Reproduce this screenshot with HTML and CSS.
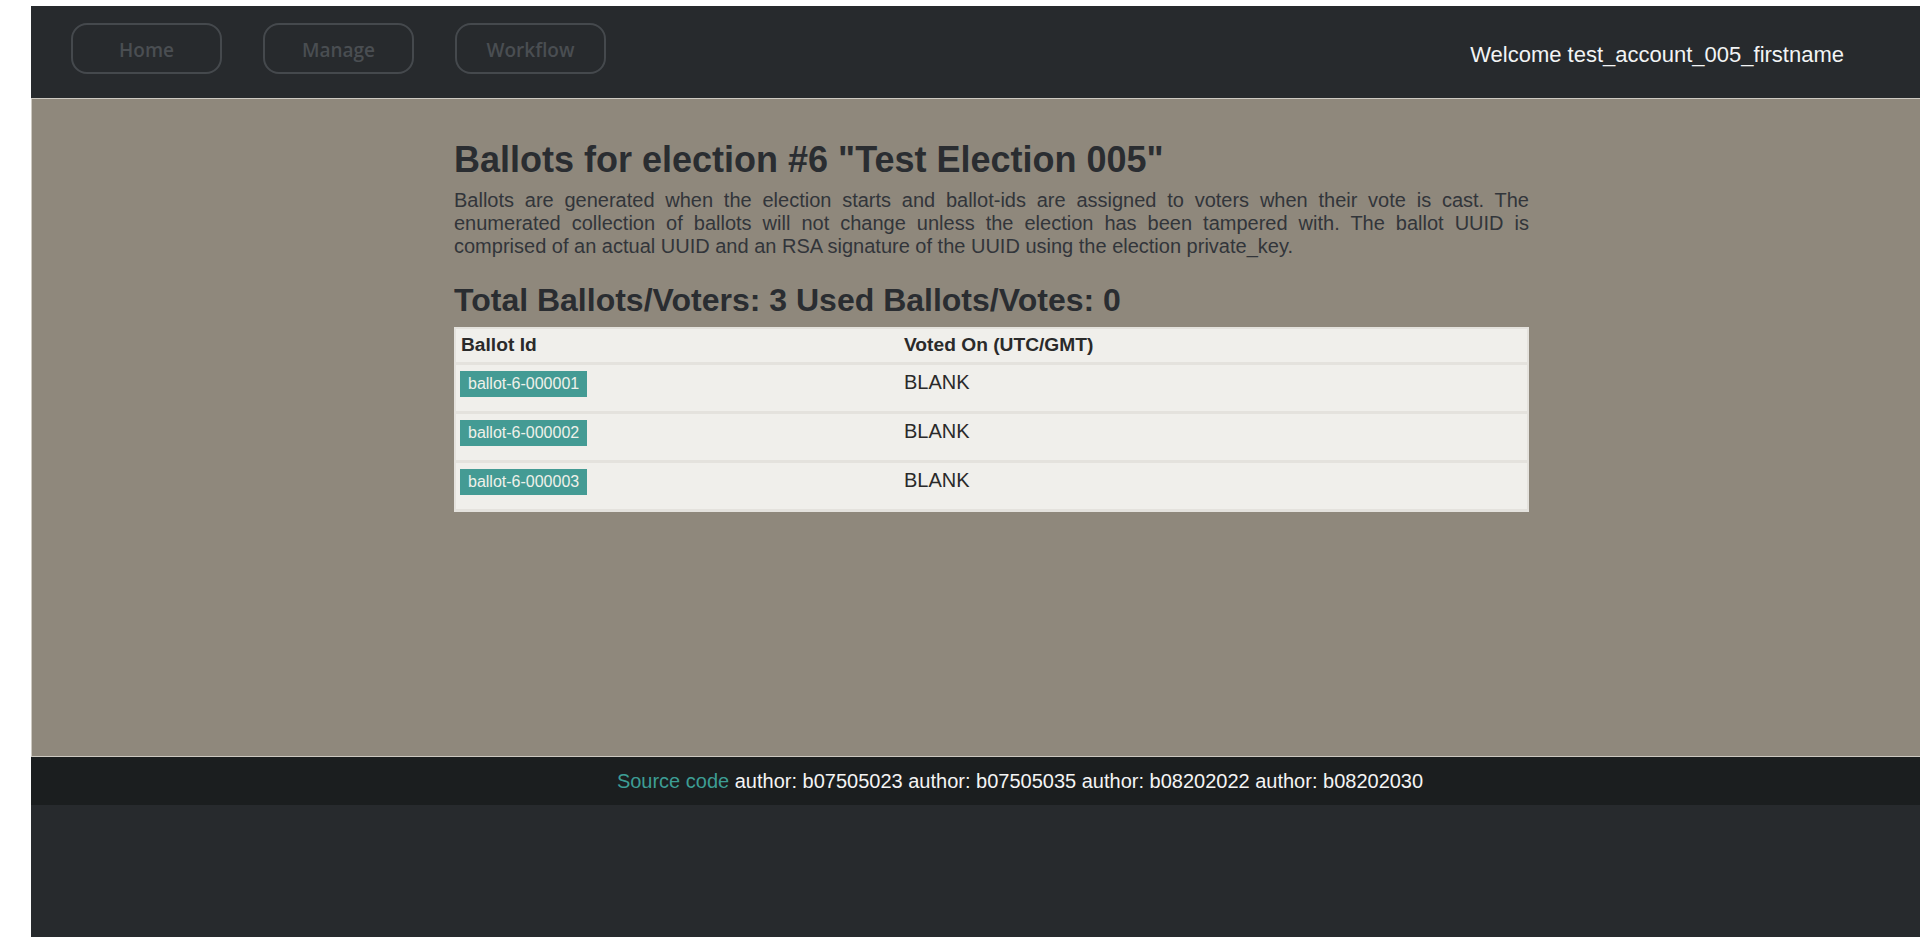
FILE: index.html
```html
<!DOCTYPE html>
<html lang="en">
<head>
<meta charset="utf-8">
<title>Ballots</title>
<link rel="stylesheet" href="styles.css">
</head>
<body>
<div class="page">
  <nav class="topnav">
    <div class="nav-buttons">
      <a class="nav-btn" href="#">Home</a>
      <a class="nav-btn" href="#">Manage</a>
      <a class="nav-btn" href="#">Workflow</a>
    </div>
    <div class="welcome">Welcome test_account_005_firstname</div>
  </nav>
  <main class="main">
    <div class="content">
      <h1 class="title">Ballots for election #6 "Test Election 005"</h1>
      <p class="intro">Ballots are generated when the election starts and ballot-ids are assigned to voters when their vote is cast. The enumerated collection of ballots will not change unless the election has been tampered with. The ballot UUID is comprised of an actual UUID and an RSA signature of the UUID using the election private_key.</p>
      <h2 class="totals">Total Ballots/Voters: 3 Used Ballots/Votes: 0</h2>
      <table class="ballots">
        <colgroup><col class="col-id"><col class="col-date"></colgroup>
        <thead>
          <tr><th>Ballot Id</th><th>Voted On (UTC/GMT)</th></tr>
        </thead>
        <tbody>
          <tr><td><span class="badge">ballot-6-000001</span></td><td>BLANK</td></tr>
          <tr><td><span class="badge">ballot-6-000002</span></td><td>BLANK</td></tr>
          <tr><td><span class="badge">ballot-6-000003</span></td><td>BLANK</td></tr>
        </tbody>
      </table>
    </div>
  </main>
  <footer class="footer">
    <a class="src-link" href="#">Source code</a> author: b07505023 author: b07505035 author: b08202022 author: b08202030
  </footer>
</div>
</body>
</html>
```

FILE: styles.css
```css
html {
  background: #ffffff;
  overflow-x: hidden;
}

body {
  margin: 6px 0 0 31px;
  font-family: "Liberation Sans", Arial, sans-serif;
}

.page {
  width: 1920px;
  min-height: 931px;
  background: #272a2d;
}

.topnav {
  height: 92px;
  box-sizing: border-box;
  display: flex;
  align-items: flex-start;
  padding: 17px 107px 0 40px;
  background: #272a2d;
}

.nav-buttons {
  display: flex;
  gap: 41px;
}

.nav-btn {
  box-sizing: border-box;
  width: 151px;
  height: 51px;
  padding-top: 3px;
  border: 2px solid #45494d;
  border-radius: 16px;
  display: flex;
  align-items: center;
  justify-content: center;
  font-family: "Open Sans", "Noto Sans", sans-serif;
  font-weight: 600;
  font-size: 19px;
  color: #4a4e52;
  text-decoration: none;
}

.welcome {
  margin-left: auto;
  align-self: center;
  margin-top: -11px;
  font-size: 22px;
  color: #f2f4f5;
}

.main {
  box-sizing: border-box;
  height: 659px;
  border: 1px solid #cdc9c1;
  border-right: none;
  background: #8f887c;
}

.content {
  width: 1075px;
  margin: 0 auto;
  padding-top: 40px;
}

.title {
  margin: 0 0 9px;
  font-size: 36px;
  font-weight: bold;
  line-height: 41px;
  color: #2a2d31;
}

.intro {
  margin: 0;
  font-size: 20px;
  line-height: 23px;
  text-align: justify;
  color: #32353a;
}

.totals {
  margin: 24px 0 9px;
  font-size: 32px;
  font-weight: bold;
  line-height: 36px;
  color: #2a2d31;
}

.ballots {
  width: 1075px;
  table-layout: fixed;
  border-collapse: separate;
  border-spacing: 0;
  border: 2px solid #e4e2dd;
  border-bottom: none;
  background: #f0efeb;
  color: #2a2a2a;
}

.col-id {
  width: 443px;
}

.ballots th {
  text-align: left;
  font-size: 19.2px;
  font-weight: bold;
  line-height: 22px;
  padding: 5px 5px 6px;
  border-bottom: 3px solid #e4e2dd;
}

.ballots td {
  vertical-align: top;
  font-size: 20px;
  line-height: 23px;
  padding: 6px 5px 14px 4px;
  border-bottom: 3px solid #e4e2dd;
}

.ballots td + td {
  padding-left: 5px;
}

.badge {
  display: inline-block;
  height: 26px;
  line-height: 26px;
  padding: 0 8px;
  font-size: 16px;
  background: #449b94;
  color: #eff1ea;
  vertical-align: top;
}

.footer {
  height: 48px;
  line-height: 48px;
  padding-left: 58px;
  text-align: center;
  background: #1b1e1f;
  font-size: 20px;
  color: #f4f4f4;
}

.src-link {
  color: #3d9d94;
  text-decoration: none;
}
```
